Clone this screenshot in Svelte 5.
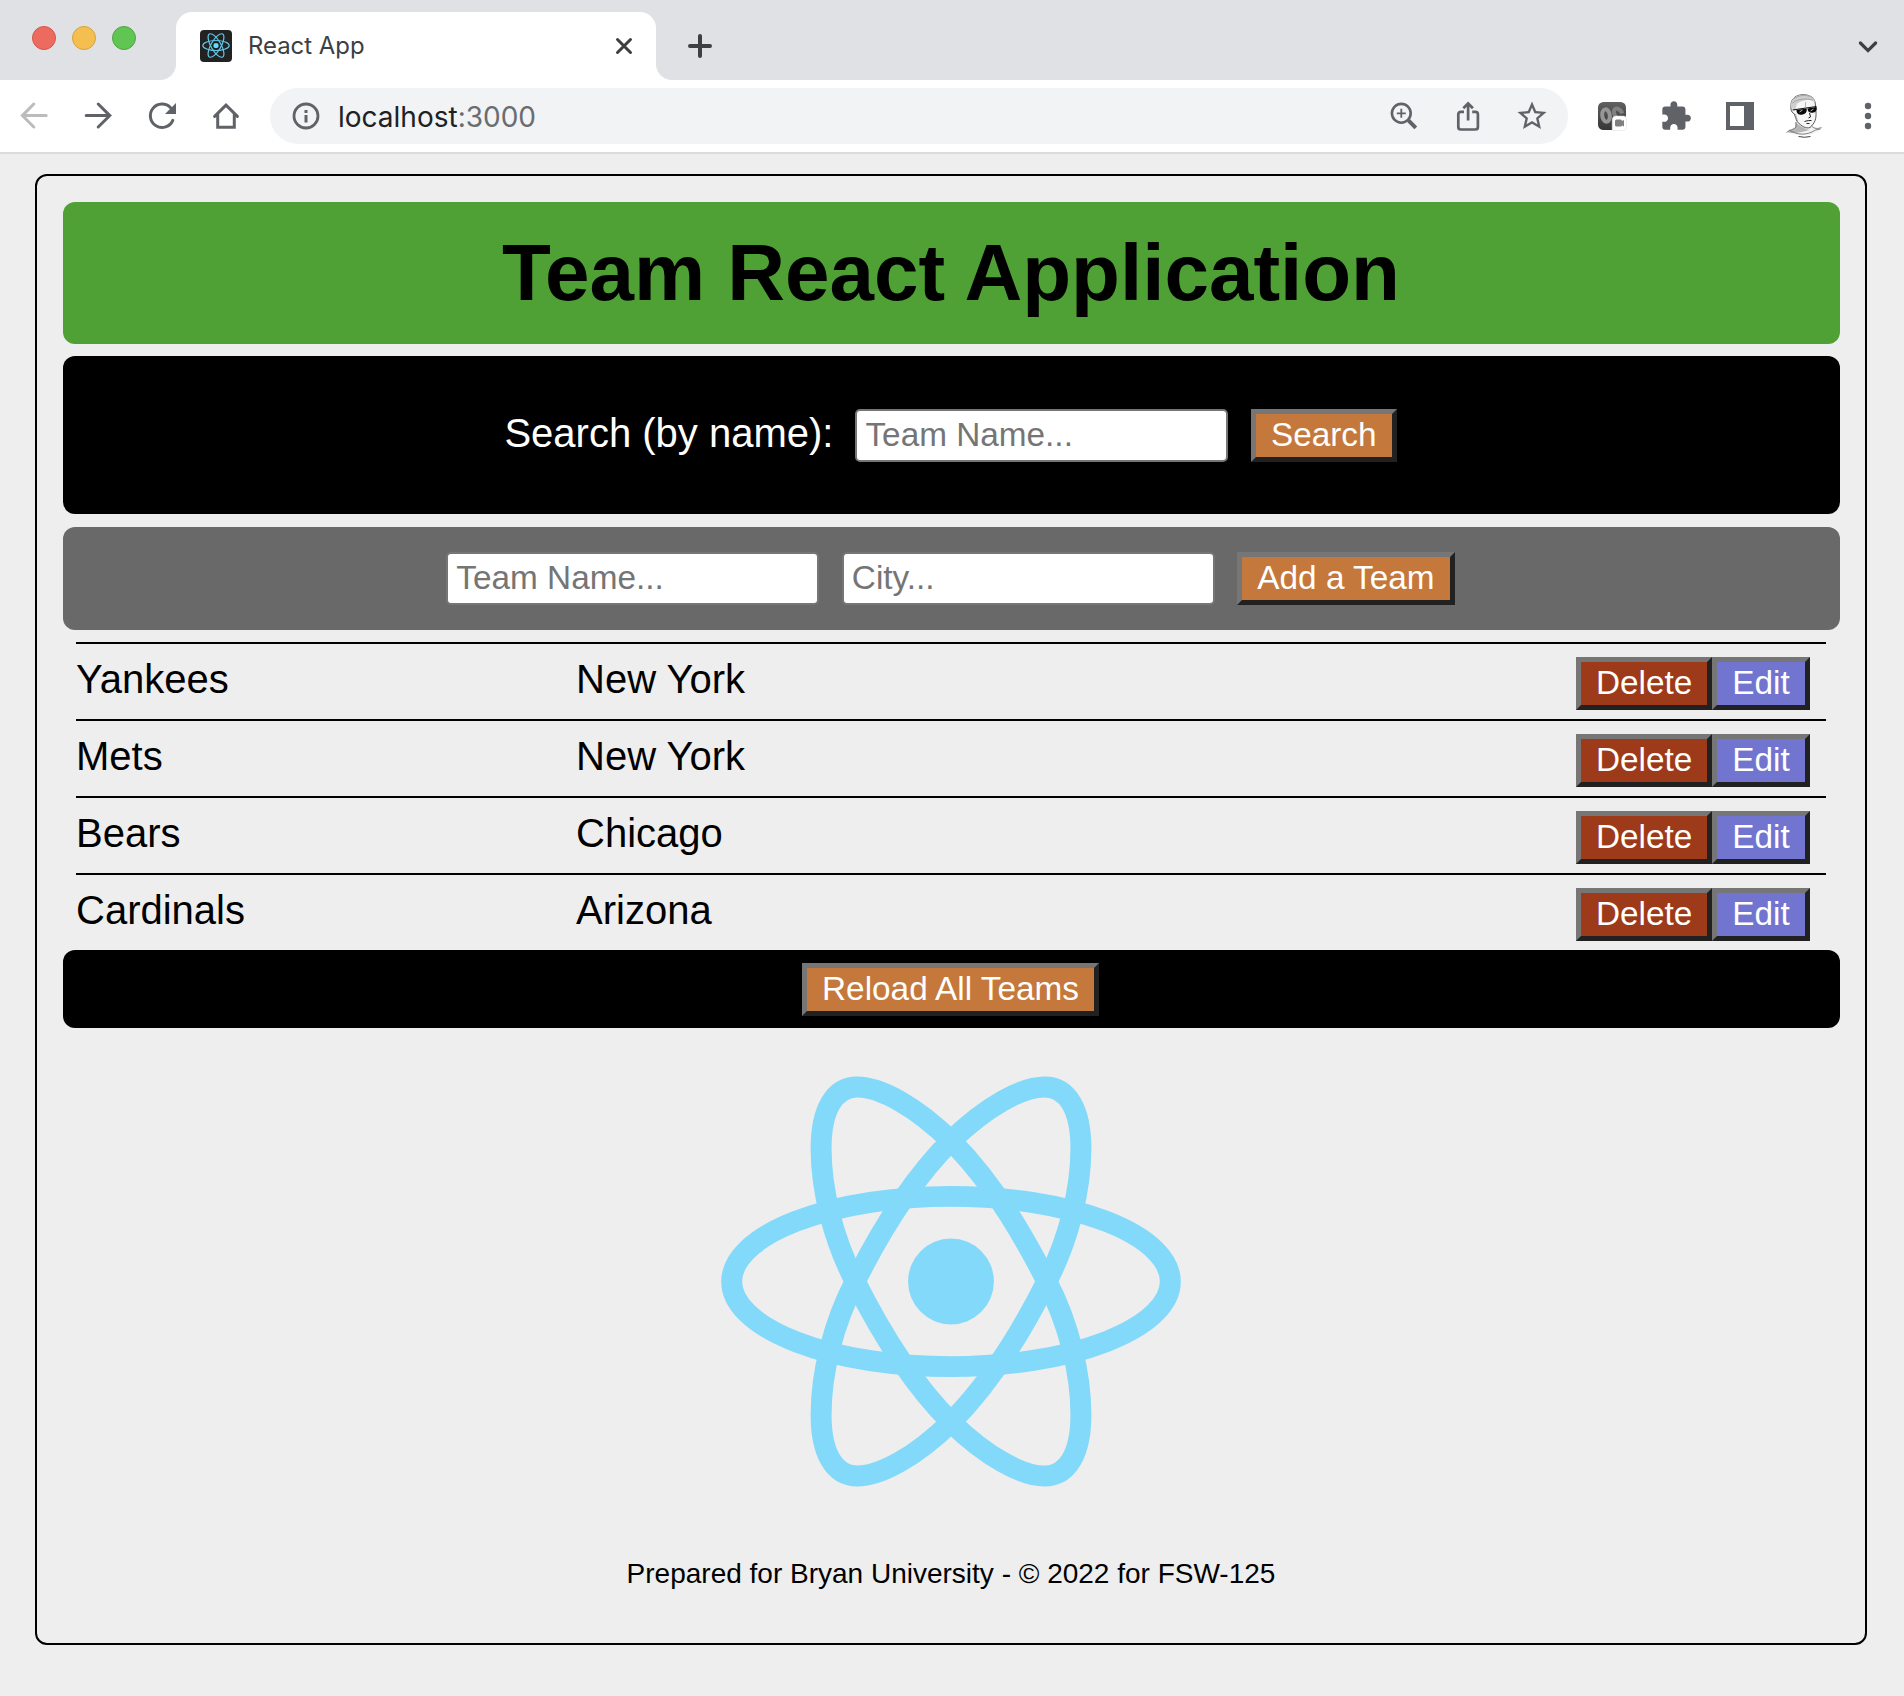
<script>
  const teams = [
    { name: 'Yankees', city: 'New York' },
    { name: 'Mets', city: 'New York' },
    { name: 'Bears', city: 'Chicago' },
    { name: 'Cardinals', city: 'Arizona' }
  ];

  // Tilted orbit of the logo; the second one is its mirror image.
  const orbit =
    'M-94-195C-71-195-36-176 0-141C36-105 70-52 96 0C118 42 130.2 92 130.2 133.5C130.2 172 117 195 94 195' +
    'C71 195 36 176 0 141C-36 105-70 52-96 0C-118-42-130.2-92-130.2-133.5C-130.2-172-117-195-94-195Z';
</script>

<div class="window">
  <header class="tabstrip">
    <div class="lights">
      <span class="light close"></span>
      <span class="light minimise"></span>
      <span class="light zoom"></span>
    </div>
    <div class="tab">
      <svg class="favicon" viewBox="0 0 32 32">
        <rect width="32" height="32" rx="4" fill="#222" />
        <g fill="none" stroke="#61c9ea" stroke-width="1.2">
          <ellipse cx="16" cy="15.5" rx="13.2" ry="5" />
          <ellipse cx="16" cy="15.5" rx="13.2" ry="5" transform="rotate(60 16 15.5)" />
          <ellipse cx="16" cy="15.5" rx="13.2" ry="5" transform="rotate(120 16 15.5)" />
        </g>
        <circle cx="16" cy="15.5" r="2.6" fill="#61dafb" />
      </svg>
      <span class="tab-title">React App</span>
      <svg class="tab-close" viewBox="0 0 20 20">
        <path d="M3.5 3.5l13 13M16.5 3.5l-13 13" stroke="#3c4043" stroke-width="3" stroke-linecap="round" />
      </svg>
    </div>
    <svg class="new-tab" viewBox="0 0 24 24">
      <path d="M12 2v20M2 12h20" stroke="#3c4043" stroke-width="4" stroke-linecap="round" />
    </svg>
    <svg class="chevron" viewBox="0 0 20 14">
      <path d="M2.4 3l7.6 7.6L17.6 3" fill="none" stroke="#3c4043" stroke-width="3.2" stroke-linecap="round" />
    </svg>
  </header>

  <nav class="toolbar">
    <div class="cell">
      <svg viewBox="0 0 40 40"><path class="line disabled" d="M32.2 19.6H8.6M19.8 8L8.4 19.6 19.8 31" /></svg>
    </div>
    <div class="cell">
      <svg viewBox="0 0 40 40"><path class="line" d="M8.2 19.6H31.6M20.2 8L31.8 19.6 20.2 31" /></svg>
    </div>
    <div class="cell">
      <svg viewBox="0 0 40 40">
        <path class="line" d="M30.8 24.4A11.7 11.7 0 1 1 28.6 11.8" />
        <path d="M34 7v11H23z" fill="#5f6368" />
      </svg>
    </div>
    <div class="cell">
      <svg viewBox="0 0 40 40">
        <path class="line" d="M8.6 20.4L20 9.2 31.4 20.4M11.7 18V31.3H28.3V18" />
      </svg>
    </div>
    <div class="omnibox">
      <svg class="info" viewBox="0 0 28 28">
        <circle cx="14" cy="14" r="12" fill="none" stroke="#5f6368" stroke-width="2.8" />
        <path d="M12.5 8h3v3h-3zM12.5 13h3v7.5h-3z" fill="#5f6368" />
      </svg>
      <span class="url"><span class="host">localhost</span><span class="port">:3000</span></span>
      <div class="cell">
        <svg viewBox="0 0 40 40">
          <circle cx="17.3" cy="17.3" r="9.4" fill="none" stroke="#5f6368" stroke-width="2.6" />
          <path d="M12.8 17.3h9M17.3 12.8v9" stroke="#5f6368" stroke-width="1.8" />
          <path d="M24.4 24.4l7.4 7.4" stroke="#5f6368" stroke-width="4" />
        </svg>
      </div>
      <div class="cell">
        <svg viewBox="0 0 40 40">
          <path
            class="thin"
            d="M16 15.8h-3.2a2.5 2.5 0 0 0-2.5 2.5V31a2.5 2.5 0 0 0 2.5 2.5h14.6a2.5 2.5 0 0 0 2.5-2.5V18.3a2.5 2.5 0 0 0-2.5-2.5h-3.2M20.1 24.5V8.5M15.3 12.3l4.8-4.8 4.8 4.8"
          />
        </svg>
      </div>
      <div class="cell">
        <svg viewBox="0 0 40 40">
          <path
            transform="translate(2.6 2.6) scale(1.45)"
            fill="#5f6368"
            d="M22 9.24l-7.19-.62L12 2 9.19 8.63 2 9.24l5.46 4.73L5.82 21 12 17.27 18.18 21l-1.63-7.03L22 9.24zM12 15.4l-3.76 2.27 1-4.28-3.32-2.88 4.38-.38L12 6.1l1.71 4.04 4.38.38-3.32 2.88 1 4.28L12 15.4z"
          />
        </svg>
      </div>
    </div>
    <div class="cell">
      <svg viewBox="0 0 40 40">
        <defs>
          <linearGradient id="ext" x1="0" y1="0" x2="0" y2="1">
            <stop offset="0" stop-color="#606060" />
            <stop offset="1" stop-color="#363636" />
          </linearGradient>
        </defs>
        <rect x="6" y="6" width="28" height="28" rx="5.5" fill="url(#ext)" />
        <ellipse cx="14" cy="19.5" rx="3.8" ry="6.2" fill="none" stroke="#969696" stroke-width="4" transform="rotate(-8 14 19.5)" />
        <path d="M30.500 17.500c-2.500-5.500-8-6.500-8.500-2.500s1.500 6 4 8" fill="none" stroke="#808080" stroke-width="4" />
        <path d="M24 20h7.500a3 3 0 0 1 3 3v8.500a3 3 0 0 1-3 3H20.200V24a4 4 0 0 1 3.800-4z" fill="#fff" stroke="#ddd" stroke-width=".5" />
        <path d="M24.500 23.500h4a1.500 1.500 0 0 1 1.500 1.500l2-1v6.500l-2-1a1.500 1.500 0 0 1-1.500 1h-4a1.500 1.500 0 0 1-1.500-1.500v-4a1.500 1.500 0 0 1 1.500-1.500z" fill="#808080" />
      </svg>
    </div>
    <div class="cell">
      <svg viewBox="0 0 40 40">
        <path
          transform="translate(3.6 3.8) scale(1.36)"
          fill="#5f6368"
          d="M20.500 11H19V7c0-1.100-.9-2-2-2h-4V3.500C13 2.120 11.880 1 10.500 1S8 2.120 8 3.500V5H4c-1.100 0-1.990.9-1.990 2v3.800H3.500c1.490 0 2.700 1.210 2.700 2.700s-1.210 2.700-2.700 2.700H2V20c0 1.100.9 2 2 2h3.800v-1.500c0-1.490 1.210-2.700 2.700-2.700 1.490 0 2.700 1.210 2.700 2.700V22H17c1.100 0 2-.9 2-2v-4h1.500c1.380 0 2.500-1.120 2.500-2.500S21.880 11 20.500 11z"
        />
      </svg>
    </div>
    <div class="cell">
      <svg viewBox="0 0 40 40">
        <path fill="#5f6368" fill-rule="evenodd" d="M6 6h28v28H6zM10 10v20h14V10z" />
      </svg>
    </div>
    <div class="cell">
      <svg class="avatar" viewBox="1.5 2 44 48">
        <path d="M7 42c3-3 7-3 9-5l2-5 14 3c2 3 6 3 10 3l-4 3c-6 5-24 6-31 1z" fill="#f2f2f2" />
        <path d="M15 32v5c-2 3-5 3-8 5 3 1.500 9 1 14 0l8-2c-5-1-11-5-14-8z" fill="#b5b5b5" />
        <path d="M10.500 17c-.5-7 3-11.500 11-12.300 8-.4 13 3.300 13.300 9.300l.7 8c.4 7-1 11-6 15.500-4 1.500-8-1-13-6-1-3-2-5-2.500-7.500-3-1-4-5-3.500-7z" fill="#f6f6f6" stroke="#444" stroke-width=".9" />
        <path d="M10.500 17c-.5-7 3-11.500 11-12.300 8-.4 12.500 2.300 13 7-6-3-12-2-18 2l-2 7z" fill="#cfcfcf" />
        <path d="M13 9c5-4 13-5 20-1M12 13c5-4 13-5 21-3M25 12v5M15 24l2 7" fill="none" stroke="#888" stroke-width=".6" />
        <path d="M16 20l10-1.500c1 3-1 6-5 6.200-3 0-5-1-5-4.700zM27 18.500l9-1.500c1 3-1 5.700-4 5.700-3 .3-5-1.200-5-4.200z" fill="#080808" />
        <path d="M12 20l24-3.500" stroke="#111" stroke-width="1.200" />
        <path d="M19 22l3-2M30 21l3-2" stroke="#bbb" stroke-width="1" />
        <path d="M24 31.500c3-1 5-1 7-1M26 33.500h3M29 23l1 4-2 1" fill="none" stroke="#222" stroke-width="1" />
        <path d="M6 42.500c3-3 8-3 9.500-5.500v-5M31 36c3 3 6 3 10 1.500M9 40c7 5 17 6 26 0l5-1" fill="none" stroke="#666" stroke-width=".8" />
        <path d="M18 46.500q6 1.500 12 0" fill="none" stroke="#444" stroke-width="1" />
      </svg>
    </div>
    <div class="cell">
      <svg viewBox="0 0 40 40" fill="#5f6368">
        <circle cx="20" cy="10" r="3.2" />
        <circle cx="20" cy="20" r="3.2" />
        <circle cx="20" cy="30" r="3.2" />
      </svg>
    </div>
  </nav>

  <main class="page">
    <div class="frame">
      <h1>Team React Application</h1>

      <section class="search">
        <label for="search-name">Search (by name):</label>
        <input id="search-name" placeholder="Team Name..." />
        <button class="primary">Search</button>
      </section>

      <section class="add">
        <input placeholder="Team Name..." aria-label="Team name" />
        <input placeholder="City..." aria-label="City" />
        <button class="primary">Add a Team</button>
      </section>

      <ul class="teams">
        {#each teams as team}
          <li>
            <span class="name">{team.name}</span>
            <span class="city">{team.city}</span>
            <button class="delete">Delete</button>
            <button class="edit">Edit</button>
          </li>
        {/each}
      </ul>

      <section class="reload">
        <button class="primary">Reload All Teams</button>
      </section>

      <svg class="logo" viewBox="-230.5 -205.5 461 411">
        <g fill="none" stroke="#83d9f9" stroke-width="21">
          <ellipse rx="219.8" ry="85.3" />
          <path d={orbit} />
          <path d={orbit} transform="scale(-1 1)" />
        </g>
        <circle r="43" fill="#83d9f9" />
      </svg>

      <footer>Prepared for Bryan University - © 2022 for FSW-125</footer>
    </div>
  </main>
</div>

<style>
  :global(body) {
    margin: 0;
    background: #eee;
  }

  .window {
    width: 1904px;
    height: 1696px;
    overflow: hidden;
    background: #eee;
    font-family: 'Liberation Sans', Arial, sans-serif;
  }

  .window * {
    box-sizing: border-box;
  }

  svg {
    display: block;
    flex: none;
  }

  /* Tab strip */
  .tabstrip {
    display: flex;
    height: 80px;
    background: #dfe1e5;
  }

  .lights {
    display: flex;
    gap: 16px;
    width: 176px;
    padding: 26px 0 0 32px;
  }

  .light {
    width: 24px;
    height: 24px;
    border-radius: 50%;
    border: 1px solid;
  }

  .close {
    background: #ed6a5e;
    border-color: #d5554a;
  }

  .minimise {
    background: #f5bf4f;
    border-color: #d8a13c;
  }

  .zoom {
    background: #61c554;
    border-color: #4fa73f;
  }

  .tab {
    position: relative;
    display: flex;
    align-items: center;
    width: 480px;
    height: 68px;
    margin-top: 12px;
    padding: 0 22px 0 24px;
    border-radius: 16px 16px 0 0;
    background: #fff;
  }

  .tab::before,
  .tab::after {
    content: '';
    position: absolute;
    bottom: 0;
    width: 16px;
    height: 16px;
  }

  .tab::before {
    left: -16px;
    background: radial-gradient(circle at 0 0, transparent 15.5px, #fff 16.5px);
  }

  .tab::after {
    right: -16px;
    background: radial-gradient(circle at 100% 0, transparent 15.5px, #fff 16.5px);
  }

  .favicon {
    width: 32px;
    height: 32px;
  }

  .tab-title {
    flex: 1;
    padding-left: 16px;
    font: 400 23.9px/32px Inter, sans-serif;
    color: #3c4043;
    white-space: nowrap;
  }

  .tab-close {
    width: 20px;
    height: 20px;
  }

  .new-tab {
    width: 24px;
    height: 24px;
    margin: 34px 0 0 32px;
  }

  .chevron {
    width: 20px;
    height: 14px;
    margin: 40px 26px 0 auto;
  }

  /* Toolbar */
  .toolbar {
    display: flex;
    align-items: center;
    height: 74px;
    padding-left: 2px;
    border-bottom: 2px solid #dadbdd;
    background: #fff;
  }

  .cell {
    display: flex;
    flex: none;
    justify-content: center;
    width: 64px;
  }

  .cell svg {
    width: 40px;
    height: 40px;
  }

  .cell .avatar {
    width: 44px;
    height: 48px;
  }

  .line {
    fill: none;
    stroke: #5f6368;
    stroke-width: 3;
    stroke-linecap: round;
  }

  .disabled {
    stroke: #babcbe;
  }

  .thin {
    fill: none;
    stroke: #5f6368;
    stroke-width: 2.7;
  }

  .omnibox {
    display: flex;
    align-items: center;
    width: 1298px;
    height: 56px;
    margin: 0 12px;
    padding: 0 4px 0 22px;
    border-radius: 28px;
    background: #f1f3f4;
  }

  .info {
    width: 28px;
    height: 28px;
  }

  .url {
    flex: 1;
    padding: 1px 0 0 18px;
    font: 400 28px/40px Inter, sans-serif;
    color: #6a6c6f;
    white-space: nowrap;
  }

  .host {
    color: #202124;
  }

  /* Page */
  .page {
    padding: 20px 37px 0 35px;
  }

  .frame {
    height: 1471px;
    padding: 26px 25px 0 26px;
    border: 2px solid #000;
    border-radius: 12px;
  }

  h1 {
    display: flex;
    align-items: center;
    justify-content: center;
    height: 142px;
    margin: 0 0 12px;
    padding-right: 1px;
    border-radius: 12px;
    background: #4fa135;
    font-size: 80px;
    line-height: 90px;
    color: #000;
  }

  .search,
  .add,
  .reload {
    display: flex;
    align-items: center;
    justify-content: center;
    gap: 22.5px;
    padding-right: 2px;
    border-radius: 12px;
  }

  .search {
    height: 158px;
    margin-bottom: 13px;
    background: #000;
  }

  label {
    padding-bottom: 4px;
    font-size: 40px;
    line-height: 46px;
    color: #fff;
  }

  .search label {
    margin-right: -0.5px;
  }

  .add {
    height: 103px;
    background: #696969;
  }

  input {
    width: 373px;
    height: 53px;
    margin: 0;
    padding: 0 0 1px 8px;
    border: 2px solid #767676;
    border-radius: 5px;
    background: #fff;
    font: 33.333px 'Liberation Sans', Arial, sans-serif;
  }

  input::placeholder {
    color: #757575;
  }

  button {
    flex: none;
    height: 53px;
    margin: 0;
    padding: 0 15px 2px;
    border: 5px solid;
    border-color: #767676 #212121 #212121 #767676;
    border-radius: 0;
    font: 33.333px/37px 'Liberation Sans', Arial, sans-serif;
    color: #fff;
  }

  .primary {
    background: #c5783b;
  }

  .delete {
    width: 136px;
    background: #9d3a19;
  }

  .edit {
    width: 98px;
    background: #7175cf;
  }

  .teams {
    margin: 12px 14px 0 13px;
    padding: 0;
    list-style: none;
  }

  li {
    display: flex;
    height: 77px;
    padding: 13px 16px 0 0;
    border-top: 2px solid #000;
    font-size: 40px;
    line-height: 44px;
    color: #000;
  }

  .name {
    width: 500px;
  }

  .city {
    flex: 1;
  }

  .reload {
    height: 78px;
    background: #000;
  }

  .logo {
    width: 461px;
    height: 411px;
    margin: 48px auto 0;
    padding-right: 1px;
  }

  footer {
    margin-top: 71px;
    padding-right: 1px;
    font-size: 28px;
    line-height: 32px;
    text-align: center;
    color: #000;
  }
</style>
